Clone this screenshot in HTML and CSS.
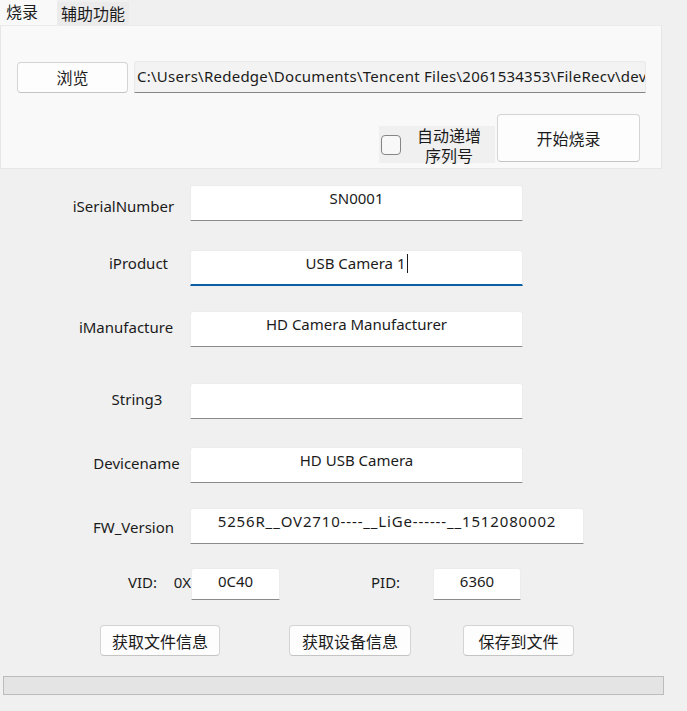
FILE: index.html
```html
<!DOCTYPE html>
<html lang="zh-CN">
<head>
<meta charset="utf-8">
<title>烧录</title>
<link rel="stylesheet" href="styles.css">
</head>
<body>
<div class="app">
  <div class="tabs">
    <div class="tab tab-active">烧录</div>
    <div class="tab">辅助功能</div>
  </div>
  <div class="pane">
    <div class="pane-row">
      <button class="btn btn-browse">浏览</button>
      <div class="path">C:\Users\Rededge\Documents\Tencent Files\2061534353\FileRecv\device</div>
    </div>
    <div class="pane-row pane-row-end">
      <label class="auto">
        <span class="chk"></span>
        <span class="auto-text">自动递增<br>序列号</span>
      </label>
      <button class="btn btn-burn">开始烧录</button>
    </div>
  </div>

  <div class="form">
    <div class="lbl lbl-serial">iSerialNumber</div>
    <div class="field">SN0001</div>

    <div class="lbl lbl-product">iProduct</div>
    <div class="field field-focus">USB Camera 1<span class="caret"></span></div>

    <div class="lbl lbl-manu">iManufacture</div>
    <div class="field">HD Camera Manufacturer</div>

    <div class="lbl lbl-str3">String3</div>
    <div class="field"></div>

    <div class="lbl lbl-dev">Devicename</div>
    <div class="field">HD USB Camera</div>

    <div class="lbl lbl-fw">FW_Version</div>
    <div class="field field-wide">5256R__OV2710----__LiGe------__1512080002</div>
  </div>

  <div class="ids">
    <div class="id-lbl id-lbl-vid"><span>VID:</span><span>0X</span></div>
    <div class="field field-id">0C40</div>
    <div class="id-lbl id-lbl-pid">PID:</div>
    <div class="field field-id field-pid">6360</div>
  </div>

  <div class="actions">
    <button class="btn btn-act btn-file">获取文件信息</button>
    <button class="btn btn-act btn-dev">获取设备信息</button>
    <button class="btn btn-act btn-save">保存到文件</button>
  </div>

  <div class="progress"></div>
</div>
</body>
</html>
```
FILE: styles.css
```css
* { box-sizing: border-box; }
html, body {
  margin: 0;
  padding: 0;
  background: #f0f0f0;
}
body {
  font-family: "Noto Sans", "Noto Sans CJK SC", sans-serif;
  font-size: 15px;
  color: #1b1b1b;
  width: 687px;
  height: 711px;
  overflow: hidden;
}
.app { display: flex; flex-direction: column; }

.tabs {
  display: flex;
  height: 25px;
  align-items: flex-end;
}
.tab {
  font-family: "Noto Sans CJK SC", sans-serif;
  font-size: 16px;
  line-height: 23px;
  height: 23px;
  padding: 0 4px;
  background: #ebebeb;
  color: #1b1b1b;
}
.tab-active {
  height: 25px;
  line-height: 23px;
  padding: 0 19px 0 6px;
  background: #f9f9f9;
}

.pane {
  width: 662px;
  height: 144px;
  background: #f9f9f9;
  border: 1px solid #e6e6e6;
  border-top-color: #ebebeb;
  padding: 35px 0 0 16px;
  display: flex;
  flex-direction: column;
}
.pane-row {
  display: flex;
  align-items: center;
  gap: 6px;
}
.pane-row-end {
  margin-top: 21px;
  justify-content: flex-end;
  align-items: flex-end;
  gap: 2px;
  padding-right: 21px;
}

.btn {
  font-family: "Noto Sans CJK SC", sans-serif;
  font-size: 16px;
  color: #1b1b1b;
  background: #fdfdfd;
  border: 1px solid #d4d4d4;
  border-bottom-color: #c4c4c4;
  border-radius: 4px;
  padding: 0;
  margin: 0;
}
.btn-browse {
  width: 111px;
  height: 31px;
}
.path {
  width: 512px;
  height: 32px;
  background: #f3f3f3;
  border: 1px solid #e9e9e9;
  border-bottom: 1px solid #868686;
  border-radius: 3px 3px 0 0;
  padding: 2px 0 0 2px;
  line-height: 24px;
  white-space: nowrap;
  overflow: hidden;
  font-size: 15px;
  letter-spacing: 0.25px;
}

.auto {
  display: flex;
  align-items: center;
  width: 116px;
  height: 37px;
  background: #f0f0f0;
  padding-left: 2px;
  margin-bottom: -1px;
}
.chk {
  width: 20px;
  height: 20px;
  border: 1px solid #858585;
  border-radius: 4px;
  background: #f8f8f8;
  flex: none;
}
.auto-text {
  flex: 1;
  text-align: center;
  font-family: "Noto Sans CJK SC", sans-serif;
  font-size: 16px;
  line-height: 20px;
  padding-left: 2px;
}
.btn-burn {
  width: 143px;
  height: 48px;
}

.form {
  display: grid;
  grid-template-columns: 116px 1fr;
  grid-template-rows: 65px 61px 72px 64px 61px 36px;
  margin-top: 16px;
  padding-left: 74px;
}
.lbl {
  height: 36px;
  display: flex;
  align-items: center;
  justify-content: center;
  font-size: 15px;
  white-space: nowrap;
}
.lbl-serial { padding: 6px 17px 0 0; }
.lbl-product { padding: 0 0 10px 13px; }
.lbl-manu { padding: 0 12px 4px 0; }
.lbl-str3 { padding: 0 0 4px 10px; }
.lbl-dev { padding: 0 0 4px 9px; }
.lbl-fw { padding: 2px 0 0 3px; }

.field {
  width: 333px;
  height: 36px;
  background: #ffffff;
  border: 1px solid #ececec;
  border-bottom: 1px solid #8a8a8a;
  border-radius: 3px 3px 0 0;
  text-align: center;
  line-height: 22px;
  padding-top: 1px;
  font-size: 15px;
  white-space: nowrap;
}
.field-focus {
  border-bottom: 2px solid #0b5fa5;
}
.caret {
  display: inline-block;
  width: 1px;
  height: 19px;
  background: #1b1b1b;
  vertical-align: -4px;
  margin-left: 1px;
}
.field-wide {
  width: 394px;
  letter-spacing: 0.85px;
}

.ids {
  display: flex;
  align-items: flex-start;
  margin-top: 24px;
  padding-left: 128px;
}
.id-lbl {
  height: 32px;
  line-height: 28px;
  font-size: 15px;
  white-space: nowrap;
}
.id-lbl-vid {
  width: 63px;
  display: flex;
  justify-content: space-between;
}
.field-id {
  width: 89px;
  height: 32px;
}
.id-lbl-pid {
  width: 62px;
  margin-left: 91px;
}
.field-pid { width: 88px; }

.actions {
  display: flex;
  margin-top: 25px;
  padding-left: 100px;
}
.btn-act { height: 31px; }
.btn-file { width: 120px; }
.btn-dev { width: 122px; margin-left: 69px; }
.btn-save { width: 111px; margin-left: 52px; }

.progress {
  margin: 20px 0 0 3px;
  width: 661px;
  height: 19px;
  background: #e4e4e4;
  border: 1px solid #bcbcbc;
}
```
